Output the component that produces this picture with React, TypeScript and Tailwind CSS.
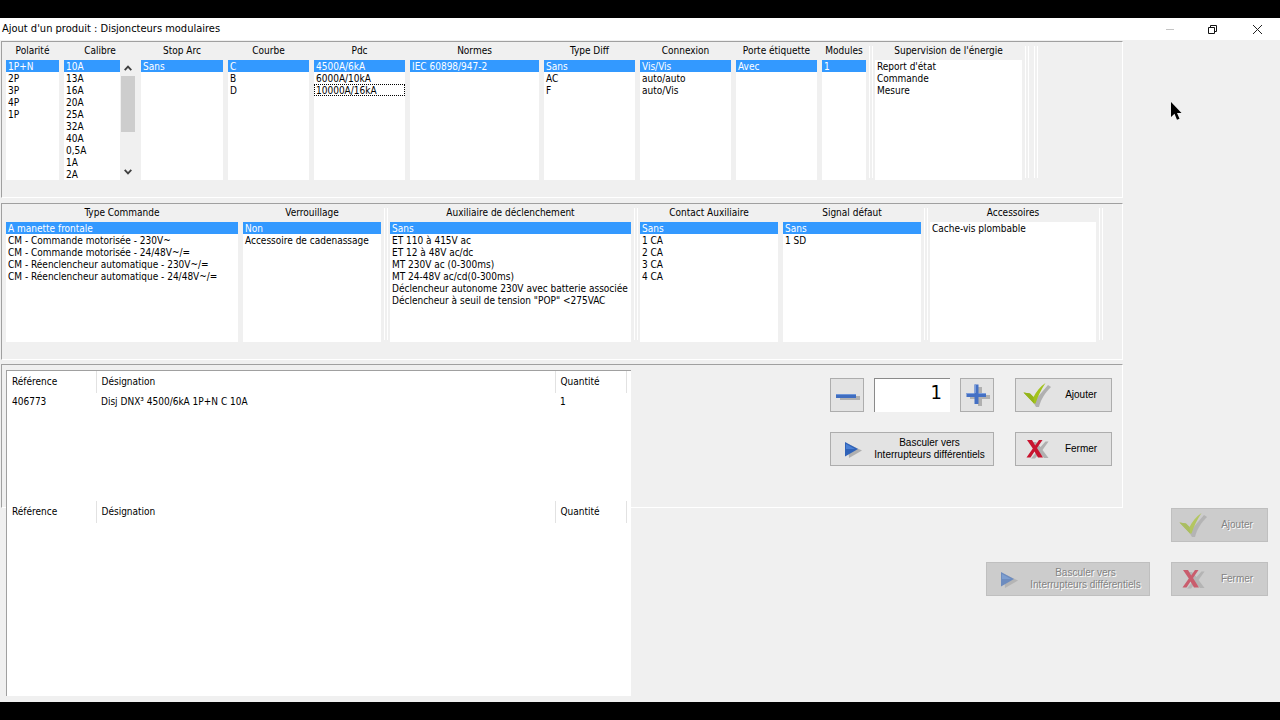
import { useRef, useState } from "react";
import type { ReactNode } from "react";

type ListProps = {
  id: string;
  label: string;
  items: string[];
  width: string;
  selected?: string;
  focused?: string;
  scroll?: boolean;
};

function ListColumn({ id, label, items, width, selected, focused, scroll }: ListProps) {
  const [value, setValue] = useState<string[]>(selected ? [selected] : []);
  const list = useRef<HTMLSelectElement>(null);
  const scrollBy = (delta: number) => list.current?.scrollBy({ top: delta });

  return (
    <div className={`flex shrink-0 flex-col ${width}`}>
      <label htmlFor={id} className="h-[18px] text-center leading-[18px] whitespace-nowrap">
        {label}
      </label>
      <div className="flex h-[120px]">
        <select
          id={id}
          ref={list}
          multiple
          size={10}
          value={value}
          onChange={(e) => setValue(Array.from(e.target.selectedOptions, (o) => o.value))}
          className="block h-full min-w-0 flex-1 overflow-hidden rounded-none border-0 bg-white p-0 text-[10px] leading-3 outline-none"
        >
          {items.map((item) => (
            <option
              key={item}
              value={item}
              className={`h-3 min-h-3 px-0.5 pt-px pb-0 leading-3 text-black checked:bg-[#3399ff] checked:bg-linear-to-r checked:from-[#3399ff] checked:to-[#3399ff] checked:text-white checked:[-webkit-text-fill-color:white] ${
                item === focused ? "outline-1 -outline-offset-1 outline-dotted outline-black" : ""
              }`}
            >
              {item}
            </option>
          ))}
        </select>
        {scroll && (
          <div className="flex w-4 shrink-0 flex-col items-center bg-[#f0f0f0]">
            <button type="button" aria-label="Défiler vers le haut" onClick={() => scrollBy(-12)} className="flex h-4 w-full items-center justify-center">
              <svg viewBox="0 0 8 6" className="h-1.5 w-2" fill="none" stroke="#404040" strokeWidth="1.8">
                <path d="M0.7 5.2 4 1.6 7.3 5.2" />
              </svg>
            </button>
            <div className="h-14 w-3.5 bg-[#cdcdcd]" />
            <button type="button" aria-label="Défiler vers le bas" onClick={() => scrollBy(12)} className="mt-auto flex h-4 w-full items-center justify-center">
              <svg viewBox="0 0 8 6" className="h-1.5 w-2" fill="none" stroke="#404040" strokeWidth="1.8">
                <path d="M0.7 0.8 4 4.4 7.3 0.8" />
              </svg>
            </button>
          </div>
        )}
      </div>
    </div>
  );
}

function Group({ children }: { children: ReactNode }) {
  return <div className="flex gap-[5px]">{children}</div>;
}

function Splitter() {
  return (
    <div className="mt-1 mr-0.5 mb-0.5 ml-[3px] flex w-1 shrink-0 justify-between">
      <span className="w-px bg-white" />
      <span className="w-px bg-white" />
    </div>
  );
}

function Panel({ height, children }: { height: string; children: ReactNode }) {
  return (
    <section className={`flex w-full max-w-[1122px] border border-t-[#a0a0a0] border-r-white border-b-white border-l-[#a0a0a0] pl-1 ${height}`}>
      {children}
    </section>
  );
}

function CheckIcon() {
  return (
    <svg viewBox="0 0 30 26" className="h-[26px] w-[30px]">
      <path d="M6 13 13 17 25 3 28 5C22 11 18 17 16 25L13 25Z" fill="#7d7d7d" opacity=".5" />
      <path d="M.5 10.500 7 11.500 10.500 15C13 10 17 4.500 22.500 1 18 7.500 15 14 12.500 21.500H11Z" fill="#a3c31b" />
      <path d="M.5 10.500 7 11.500 10.500 15 11 21.500Z" fill="#94b41c" />
    </svg>
  );
}

function CrossIcon() {
  return (
    <svg viewBox="0 0 26 26" className="size-[26px]">
      <path d="M7 6h4l4.500 5 5-5.500h3l-6 8.500 6 8h-4.500l-4.500-5-4.500 5.500H6l7-8.500Z" fill="#7d7d7d" opacity=".5" />
      <path d="M2 4H7L10.200 9.500 14 4H17.500L12 12 18 21.500H13L9.500 15.500 5.500 21.500H1.500L7.800 12.500Z" fill="#c8142f" />
    </svg>
  );
}

function PlayIcon() {
  return (
    <svg viewBox="0 0 18 18" className="size-[18px]">
      <path d="M4 4 18 10.500 5 18Z" fill="#7d7d7d" opacity=".5" />
      <path d="M1 2 14 9 1 16.500Z" fill="#2f62b8" />
      <path d="M2 4 11 9H2Z" fill="#4a80d4" />
    </svg>
  );
}

function MinusIcon() {
  return (
    <svg viewBox="0 0 26 24" className="h-6 w-[26px]">
      <path d="M5 13h20v4H5Z" fill="#7d7d7d" opacity=".5" />
      <path d="M1 11h20v4H1Z" fill="#3f6dc0" />
      <path d="M1 11h20v1H1Z" fill="#6d95d8" />
    </svg>
  );
}

function PlusIcon() {
  return (
    <svg viewBox="0 0 26 24" className="h-6 w-[26px]">
      <path d="M13 4h4v8h8v4h-8v7h-4v-7H5v-4h8Z" fill="#7d7d7d" opacity=".5" />
      <path d="M9.500 1.500h4V10H21v4h-7.500v7h-4v-7H1.500v-4h8Z" fill="#4470c4" />
      <path d="M9.500 1.500H11V10H9.500ZM1.500 10h8v1h-8ZM13.500 10H21v1h-7.500Z" fill="#7b9ddb" />
    </svg>
  );
}

type ActionProps = { icon: ReactNode; width: string; disabled?: boolean; children: ReactNode };

function ActionButton({ icon, width, disabled, children }: ActionProps) {
  return (
    <button
      type="button"
      disabled={disabled}
      className={`flex h-[34px] items-center border border-[#adadad] bg-[#e3e3e3] pr-0.5 pl-[7px] font-['Liberation_Sans',sans-serif] text-[10px] leading-3 disabled:border-[#bfbfbf] disabled:bg-[#cccccc] disabled:text-[#838383] disabled:text-shadow-[1px_1px_0_#fff] ${width}`}
    >
      <span className={`flex w-[30px] shrink-0 justify-center ${disabled ? "opacity-60" : ""}`}>{icon}</span>
      <span className="flex-1 text-center whitespace-nowrap">{children}</span>
    </button>
  );
}

function SwitchButton({ disabled }: { disabled?: boolean }) {
  return (
    <ActionButton icon={<PlayIcon />} width="w-[164px]" disabled={disabled}>
      Basculer vers
      <br />
      Interrupteurs différentiels
    </ActionButton>
  );
}

function ProductTable({ rows, height }: { rows: string[][]; height: string }) {
  return (
    <div className={height}>
      <table className="w-full table-fixed border-collapse text-left">
        <colgroup>
          <col className="w-[89px]" />
          <col />
          <col className="w-[71px]" />
          <col className="w-[5px]" />
        </colgroup>
        <thead>
          <tr className="h-[22px]">
            <th className="border-r border-[#e2e2e2] p-0 pl-[5px] font-normal">Référence</th>
            <th className="border-r border-[#e2e2e2] p-0 pl-[5px] font-normal">Désignation</th>
            <th className="border-r border-[#e2e2e2] p-0 pl-[5px] font-normal">Quantité</th>
            <td className="p-0" />
          </tr>
        </thead>
        <tbody>
          {rows.map((row) => (
            <tr key={row[0]} className="h-[18px]">
              {row.map((cell) => (
                <td key={cell} className="p-0 pl-[5px]">
                  {cell}
                </td>
              ))}
              <td className="p-0" />
            </tr>
          ))}
        </tbody>
      </table>
    </div>
  );
}

const actuators = [
  "A manette frontale",
  "CM - Commande motorisée - 230V~",
  "CM - Commande motorisée - 24/48V~/=",
  "CM - Réenclencheur automatique - 230V~/=",
  "CM - Réenclencheur automatique - 24/48V~/=",
];

const releases = [
  "Sans",
  "ET 110 à 415V ac",
  "ET 12 à 48V ac/dc",
  "MT 230V ac (0-300ms)",
  "MT 24-48V ac/cd(0-300ms)",
  "Déclencheur autonome 230V avec batterie associée",
  'Déclencheur à seuil de tension "POP" <275VAC',
];

export default function App() {
  const [quantity, setQuantity] = useState(1);

  return (
    <div className="relative flex h-screen flex-col overflow-hidden bg-black pt-[18px] pb-[18px] font-['DejaVu_Sans_Condensed','DejaVu_Sans',sans-serif] text-[10px] leading-3 text-black">
      <header className="flex h-[22px] shrink-0 items-center justify-between bg-white pl-0.5">
        <h1 className="text-[11px] leading-[22px]">Ajout d'un produit : Disjoncteurs modulaires</h1>
        <div className="flex h-full items-center">
          <button type="button" aria-label="Réduire" disabled className="flex w-[43px] justify-center">
            <svg viewBox="0 0 10 10" className="size-2.5" stroke="#c4c4c4"><path d="M1 5.500h8" /></svg>
          </button>
          <button type="button" aria-label="Restaurer" className="flex w-[43px] justify-center">
            <svg viewBox="0 0 11 11" className="size-[11px]" fill="none" stroke="#111"><path d="M1.500 3.500h6v6h-6ZM3.500 3.500v-2h6v6h-2" /></svg>
          </button>
          <button type="button" aria-label="Fermer la fenêtre" className="flex w-[46px] justify-center">
            <svg viewBox="0 0 11 11" className="size-[11px]" stroke="#222"><path d="M1 1 10 10M10 1 1 10" /></svg>
          </button>
        </div>
      </header>

      <main className="flex min-h-0 flex-1 flex-col bg-[#f0f0f0] pt-px pl-px">
        <Panel height="h-[157px] shrink-0">
          <div className="flex h-[138px]">
            <Group>
              <ListColumn id="polarite" label="Polarité" width="w-[53px]" items={["1P+N", "2P", "3P", "4P", "1P"]} selected="1P+N" />
              <ListColumn id="calibre" label="Calibre" width="w-[72px]" items={["10A", "13A", "16A", "20A", "25A", "32A", "40A", "0,5A", "1A", "2A"]} selected="10A" scroll />
              <ListColumn id="stop-arc" label="Stop Arc" width="w-[82px]" items={["Sans"]} selected="Sans" />
              <ListColumn id="courbe" label="Courbe" width="w-[81px]" items={["C", "B", "D"]} selected="C" />
              <ListColumn id="pdc" label="Pdc" width="w-[91px]" items={["4500A/6kA", "6000A/10kA", "10000A/16kA"]} selected="4500A/6kA" focused="10000A/16kA" />
              <ListColumn id="normes" label="Normes" width="w-[129px]" items={["IEC 60898/947-2"]} selected="IEC 60898/947-2" />
              <ListColumn id="type-diff" label="Type Diff" width="w-[91px]" items={["Sans", "AC", "F"]} selected="Sans" />
              <ListColumn id="connexion" label="Connexion" width="w-[91px]" items={["Vis/Vis", "auto/auto", "auto/Vis"]} selected="Vis/Vis" />
              <ListColumn id="porte-etiquette" label="Porte étiquette" width="w-[81px]" items={["Avec"]} selected="Avec" />
              <ListColumn id="modules" label="Modules" width="w-[44px]" items={["1"]} selected="1" />
            </Group>
            <Splitter />
            <ListColumn id="supervision" label="Supervision de l'énergie" width="w-[147px]" items={["Report d'état", "Commande", "Mesure"]} />
            <Splitter />
            <Splitter />
          </div>
        </Panel>

        <Panel height="mt-[5px] h-[157px] shrink-0">
          <div className="flex h-[138px]">
            <Group>
              <ListColumn id="type-commande" label="Type Commande" width="w-[232px]" items={actuators} selected={actuators[0]} />
              <ListColumn id="verrouillage" label="Verrouillage" width="w-[138px]" items={["Non", "Accessoire de cadenassage"]} selected="Non" />
            </Group>
            <Splitter />
            <ListColumn id="auxiliaire" label="Auxiliaire de déclenchement" width="w-[241px]" items={releases} selected="Sans" />
            <Splitter />
            <Group>
              <ListColumn id="contact" label="Contact Auxiliaire" width="w-[138px]" items={["Sans", "1 CA", "2 CA", "3 CA", "4 CA"]} selected="Sans" />
              <ListColumn id="signal" label="Signal défaut" width="w-[138px]" items={["Sans", "1 SD"]} selected="Sans" />
            </Group>
            <Splitter />
            <ListColumn id="accessoires" label="Accessoires" width="w-[166px]" items={["Cache-vis plombable"]} />
            <Splitter />
          </div>
        </Panel>

        <Panel height="mt-1 h-[144px] shrink-0 justify-between pr-2.5">
          <div className="mt-[5px] h-[326px] w-[625px] border-t border-l border-[#a0a0a0] bg-white">
            <ProductTable height="h-[130px]" rows={[["406773", "Disj DNX³ 4500/6kA 1P+N C 10A", "1"]]} />
            <ProductTable height="h-[130px]" rows={[]} />
          </div>
          <div className="mt-[13px] flex flex-col gap-5">
            <div className="flex gap-[21px]">
              <div className="flex w-[164px] justify-between">
                <button type="button" aria-label="Diminuer la quantité" onClick={() => setQuantity(quantity - 1)} className="flex size-[34px] items-center justify-center border border-[#adadad] bg-[#e3e3e3] pl-0.5">
                  <MinusIcon />
                </button>
                <input
                  aria-label="Quantité à ajouter"
                  value={quantity}
                  onChange={(e) => setQuantity(Number(e.target.value) || 0)}
                  className="h-[34px] w-[76px] border-t border-l border-[#8a8a8a] bg-white pr-2 pb-2 text-right text-xl leading-6 outline-none"
                />
                <button type="button" aria-label="Augmenter la quantité" onClick={() => setQuantity(quantity + 1)} className="flex size-[34px] items-center justify-center border border-[#adadad] bg-[#e3e3e3] pl-0.5">
                  <PlusIcon />
                </button>
              </div>
              <ActionButton icon={<CheckIcon />} width="w-[97px]">Ajouter</ActionButton>
            </div>
            <div className="flex gap-[21px]">
              <SwitchButton />
              <ActionButton icon={<CrossIcon />} width="w-[97px]">Fermer</ActionButton>
            </div>
          </div>
        </Panel>

        <div className="flex flex-col items-end gap-5 pr-3">
          <ActionButton icon={<CheckIcon />} width="w-[97px]" disabled>Ajouter</ActionButton>
          <div className="flex gap-[21px]">
            <SwitchButton disabled />
            <ActionButton icon={<CrossIcon />} width="w-[97px]" disabled>Fermer</ActionButton>
          </div>
        </div>
      </main>

      <svg viewBox="0 0 12 20" className="pointer-events-none absolute top-[101px] left-[1170px] h-5 w-3" aria-hidden="true">
        <path d="M1 1V16L4.500 12.800 7 18.800 9.500 17.700 7 12H11.500Z" fill="#000" />
      </svg>
    </div>
  );
}
